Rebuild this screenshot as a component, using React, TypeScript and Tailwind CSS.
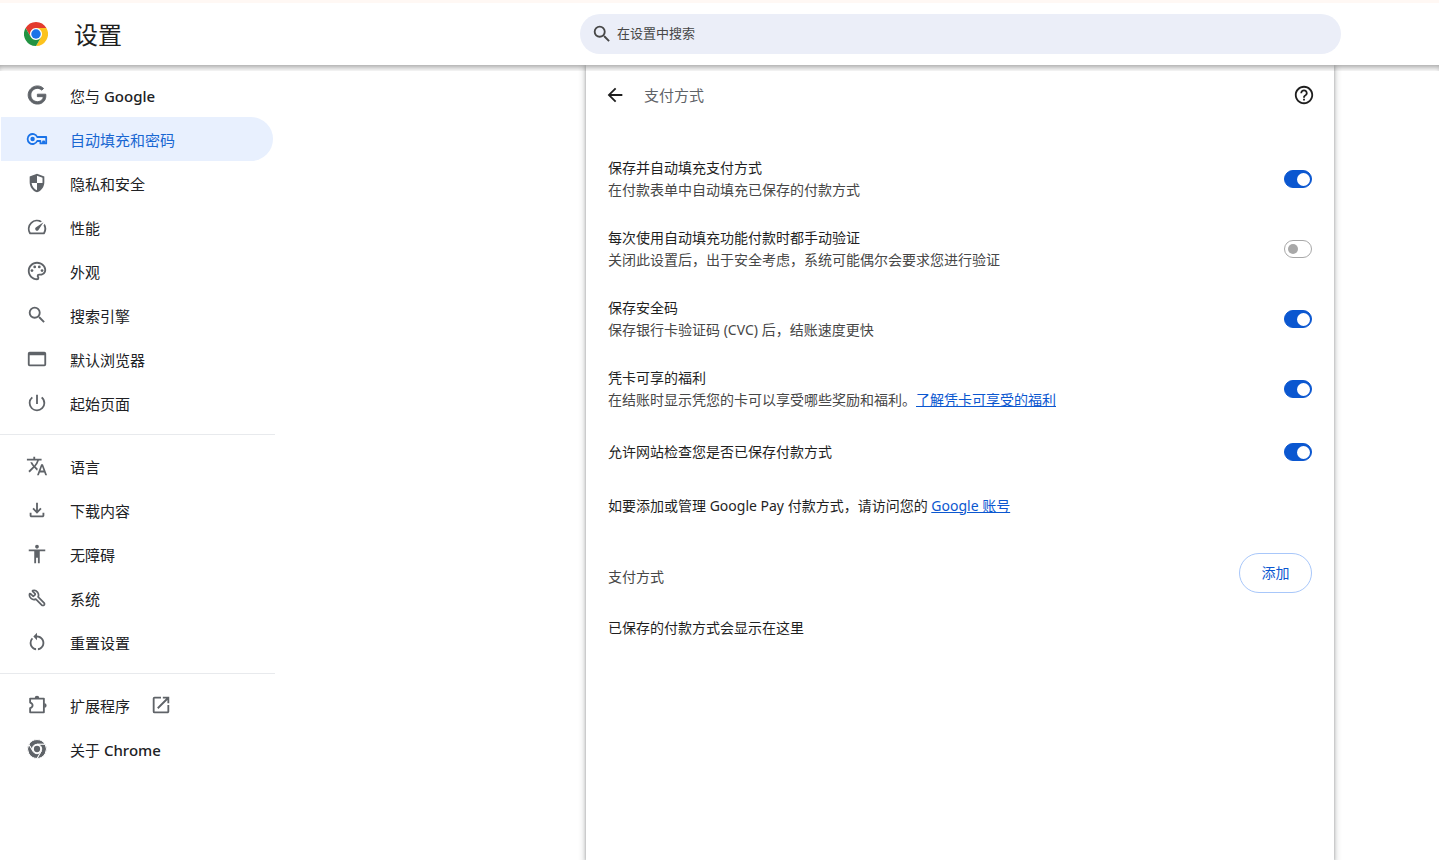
import React from 'react'
import clsx from 'clsx'
import { Wrench } from 'lucide-react'
import {
  MdAccessibility,
  MdArrowBack,
  MdHelpOutline,
  MdOpenInNew,
  MdOutlineFileDownload,
  MdOutlinePalette,
  MdOutlineSpeed,
  MdPowerSettingsNew,
  MdRestartAlt,
  MdSearch,
  MdTranslate,
} from 'react-icons/md'

type IconProps = { className?: string }

function ChromeLogo() {
  return (
    <svg viewBox="0 0 48 48" className="size-6" aria-hidden="true">
      <circle cx="24" cy="24" r="12" fill="#fff" />
      <path fill="#e33b2e" d="M24,12H44.7812a23.9939,23.9939,0,0,0-41.5639.0029L13.6079,30l.0093-.0024A11.9852,11.9852,0,0,1,24,12Z" />
      <path fill="#fcc31e" d="M34.3913,30.0029,24.0007,48A23.994,23.994,0,0,0,44.78,12.0031H23.9989l-.0025.0093A11.985,11.985,0,0,1,34.3913,30.0029Z" />
      <path fill="#229342" d="M13.6086,30.0031,3.218,12.006A23.994,23.994,0,0,0,24.0025,48L34.3931,30.0029l-.0067-.0068a11.9852,11.9852,0,0,1-20.7778.007Z" />
      <circle cx="24" cy="24" r="9.5" fill="#1a73e8" />
    </svg>
  )
}

function ChromeIcon({ className }: IconProps) {
  return (
    <svg viewBox="-4 -4 56 56" className={className} fill="currentColor" aria-hidden="true">
      <g stroke="#fff" strokeWidth="2.5">
        <path d="M24,12H44.7812a23.9939,23.9939,0,0,0-41.5639.0029L13.6079,30l.0093-.0024A11.9852,11.9852,0,0,1,24,12Z" />
        <path d="M34.3913,30.0029,24.0007,48A23.994,23.994,0,0,0,44.78,12.0031H23.9989l-.0025.0093A11.985,11.985,0,0,1,34.3913,30.0029Z" />
        <path d="M13.6086,30.0031,3.218,12.006A23.994,23.994,0,0,0,24.0025,48L34.3931,30.0029l-.0067-.0068a11.9852,11.9852,0,0,1-20.7778.007Z" />
      </g>
      <circle cx="24" cy="24" r="8" />
    </svg>
  )
}

function GoogleIcon({ className }: IconProps) {
  return (
    <svg viewBox="-2.5 -2.5 29 29" className={className} fill="currentColor" stroke="currentColor" strokeWidth="1.2" aria-hidden="true">
      <path d="M12.48 10.92v3.28h7.84c-.24 1.84-.853 3.187-1.787 4.133-1.147 1.147-2.933 2.4-6.053 2.4-4.827 0-8.6-3.893-8.6-8.72s3.773-8.72 8.6-8.72c2.6 0 4.507 1.027 5.907 2.347l2.307-2.307C18.747 1.44 16.133 0 12.48 0 5.867 0 .307 5.387.307 12s5.56 12 12.173 12c3.573 0 6.267-1.173 8.373-3.36 2.16-2.16 2.84-5.213 2.84-7.667 0-.76-.053-1.467-.173-2.053H12.48z" />
    </svg>
  )
}

function KeyIcon({ className }: IconProps) {
  return (
    <svg viewBox="0 0 22 22" className={className} fill="none" stroke="currentColor" strokeWidth="1.8" strokeLinejoin="round" aria-hidden="true">
      <path d="M11.2 9A5 5 0 1 0 11.2 13H14.4V15.4H17V13.4H18.2V15.4H20.2V9Z" />
      <circle cx="6.6" cy="11" r="2.2" fill="currentColor" stroke="none" />
    </svg>
  )
}

function ShieldIcon({ className }: IconProps) {
  return (
    <svg viewBox="0 0 24 24" className={className} fill="currentColor" fillRule="evenodd" aria-hidden="true">
      <path d="M12 2 4 5v6.1c0 5 3.4 9.8 8 10.9 4.6-1.1 8-5.9 8-10.9V5zM12 4.1V12h6V6.4zM12 12H6.1c.5 3.8 2.9 7 5.9 7.9z" />
    </svg>
  )
}

function WindowIcon({ className }: IconProps) {
  return (
    <svg viewBox="0 0 24 24" className={className} fill="currentColor" fillRule="evenodd" aria-hidden="true">
      <path d="M4 4h16a2 2 0 0 1 2 2v12a2 2 0 0 1-2 2H4a2 2 0 0 1-2-2V6a2 2 0 0 1 2-2zM4 8v10h16V8z" />
    </svg>
  )
}

function WrenchIcon({ className }: IconProps) {
  return <Wrench className={clsx(className, '-scale-x-100 p-0.5')} strokeWidth={2.3} aria-hidden="true" />
}

function ExtensionIcon({ className }: IconProps) {
  return (
    <svg viewBox="0 0 24 24" className={className} fill="none" stroke="currentColor" strokeWidth="2" strokeLinejoin="round" aria-hidden="true">
      <path d="M4.5 5H19.5V20H4.5V15.5C6.2 15 7.2 13.9 7.2 12.4S6.2 9.8 4.5 9.3Z" />
      <path fill="currentColor" stroke="none" d="M9.5 4.5a2.5 2.5 0 0 1 5 0zM20 10a2.5 2.5 0 0 1 0 5z" />
    </svg>
  )
}

const navGroups = [
  [
    { label: '您与', latin: 'Google', Icon: GoogleIcon },
    { label: '自动填充和密码', Icon: KeyIcon, active: true },
    { label: '隐私和安全', Icon: ShieldIcon },
    { label: '性能', Icon: MdOutlineSpeed },
    { label: '外观', Icon: MdOutlinePalette },
    { label: '搜索引擎', Icon: MdSearch },
    { label: '默认浏览器', Icon: WindowIcon },
    { label: '起始页面', Icon: MdPowerSettingsNew },
  ],
  [
    { label: '语言', Icon: MdTranslate },
    { label: '下载内容', Icon: MdOutlineFileDownload },
    { label: '无障碍', Icon: MdAccessibility },
    { label: '系统', Icon: WrenchIcon },
    { label: '重置设置', Icon: MdRestartAlt },
  ],
  [
    { label: '扩展程序', Icon: ExtensionIcon, external: true },
    { label: '关于', latin: 'Chrome', Icon: ChromeIcon },
  ],
]

function NavItem({ label, latin, Icon, active, external }: {
  label: string
  latin?: string
  Icon: React.ComponentType<IconProps>
  active?: boolean
  external?: boolean
}) {
  return (
    <a
      href="#"
      className={clsx(
        'ml-px mr-0.5 flex h-11 items-center pl-[25px]',
        active ? 'rounded-r-full bg-[#e8f0fe] text-[#1967d2]' : 'text-[#202124]'
      )}
    >
      <Icon className={active ? 'size-[22px] text-[#1a73e8]' : 'size-[22px] text-[#5f6368]'} />
      <span className="ml-[22px] pt-0.5 text-[15px]">
        {label}
        {latin && <span className="font-medium"> {latin}</span>}
      </span>
      {external && <MdOpenInNew className="ml-5 size-[22px] text-[#5f6368]" />}
    </a>
  )
}

function Toggle({ id, defaultChecked }: { id: string; defaultChecked: boolean }) {
  return (
    <input
      id={id}
      type="checkbox"
      role="switch"
      defaultChecked={defaultChecked}
      className="flex h-[18px] w-7 shrink-0 appearance-none items-center rounded-full border border-[#a8a8a8] bg-white pl-[3px] before:size-[10px] before:rounded-full before:bg-[#a8a8a8] checked:border-[#0b57d0] checked:bg-[#0b57d0] checked:pl-3 checked:before:size-[13px] checked:before:bg-white"
    />
  )
}

const settings = [
  { id: 'autofill', title: '保存并自动填充支付方式', text: '在付款表单中自动填充已保存的付款方式', on: true },
  { id: 'verify', title: '每次使用自动填充功能付款时都手动验证', text: '关闭此设置后，出于安全考虑，系统可能偶尔会要求您进行验证', on: false },
  { id: 'cvc', title: '保存安全码', text: '保存银行卡验证码 (CVC) 后，结账速度更快', on: true },
  { id: 'benefits', title: '凭卡可享的福利', text: '在结账时显示凭您的卡可以享受哪些奖励和福利。', link: '了解凭卡可享受的福利', on: true },
  { id: 'check', title: '允许网站检查您是否已保存付款方式', on: true },
]

export default function App() {
  return (
    <div className="flex min-h-screen flex-col bg-white font-['Noto_Sans','Noto_Sans_CJK_SC',sans-serif] text-[#1f1f1f]">
      <header className="relative z-10 flex h-[65px] items-center border-t-[3px] border-[#fff8f4] bg-white">
        <div className="flex items-center pl-6">
          <ChromeLogo />
          <h1 className="ml-[26px] pt-0.5 text-2xl">设置</h1>
        </div>
        <label className="mr-[98px] ml-auto flex h-10 w-full max-w-[761px] items-center rounded-full bg-[#ebeef8] pl-[11px] text-[#474747]">
          <MdSearch className="size-[22px]" aria-hidden="true" />
          <input
            type="search"
            aria-label="在设置中搜索"
            placeholder="在设置中搜索"
            className="ml-1 flex-1 bg-transparent text-[13px] outline-none placeholder:text-[#474747]"
          />
        </label>
        <div className="absolute inset-x-0 top-full h-1.5 shadow-[inset_0_5px_6px_-3px_rgba(0,0,0,0.4)]" />
      </header>

      <div className="flex flex-1">
        <nav className="w-[275px] shrink-0 pt-2">
          {navGroups.map((group, i) => (
            <div key={i} className={i > 0 ? 'mt-[9px] border-t border-[#e8eaed] pt-[9px]' : ''}>
              {group.map((item) => (
                <NavItem key={item.label} {...item} />
              ))}
            </div>
          ))}
        </nav>

        <main className="mr-[105px] ml-auto w-full max-w-[748px] px-[22px] shadow-[0_1px_3px_0_rgba(60,64,67,0.4),0_2px_6px_2px_rgba(60,64,67,0.2)]">
          <div className="-mr-[3px] -ml-1 flex h-[60px] items-center">
            <button type="button" aria-label="返回">
              <MdArrowBack className="size-[22px]" />
            </button>
            <h2 className="ml-[18px] flex-1 text-[15px] text-[#5f6368]">支付方式</h2>
            <button type="button" aria-label="帮助">
              <MdHelpOutline className="size-[22px]" />
            </button>
          </div>

          <div className="mt-[19px] text-sm">
            {settings.map((s) => (
              <div key={s.id} className={clsx('flex items-center justify-between', s.text ? 'h-[70px]' : 'h-14')}>
                <div className="leading-[22px]">
                  <label htmlFor={s.id} className="block">{s.title}</label>
                  {s.text && (
                    <p className="text-[#474747]">
                      {s.text}
                      {s.link && <a href="#" className="text-[#0b57d0] underline">{s.link}</a>}
                    </p>
                  )}
                </div>
                <Toggle id={s.id} defaultChecked={s.on} />
              </div>
            ))}

            <p className="flex h-[51px] items-center whitespace-pre">
              如要添加或管理 Google Pay 付款方式，请访问您的 <a href="#" className="text-[#0b57d0] underline">Google 账号</a>
            </p>

            <div className="mt-[22px] flex items-center justify-between">
              <h3 className="pt-2 text-[#474747]">支付方式</h3>
              <button type="button" className="h-10 w-[73px] rounded-full border border-[#a8c7fa] text-[#0b57d0]">
                添加
              </button>
            </div>
            <p className="mt-[25px]">已保存的付款方式会显示在这里</p>
          </div>
        </main>
      </div>
    </div>
  )
}
